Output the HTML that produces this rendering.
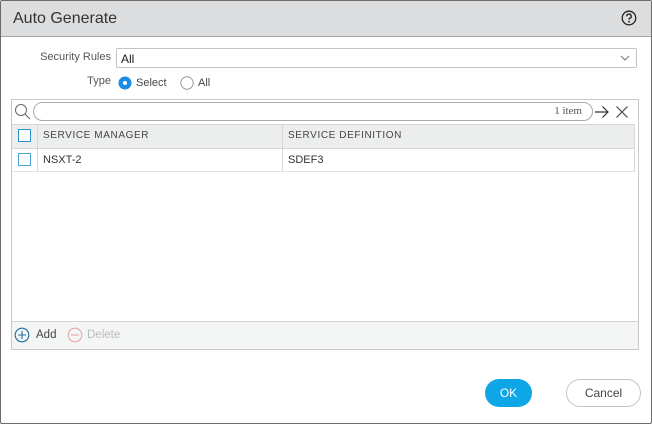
<!DOCTYPE html>
<html><head><meta charset="utf-8"><style>
*{box-sizing:border-box;margin:0;padding:0}
body{width:652px;height:424px;overflow:hidden;background:#fff;font-family:"Liberation Sans",sans-serif;position:relative;color:#333}
.a{position:absolute}
</style></head><body>
<div class="a" style="left:0;top:0;width:652px;height:424px;border:1px solid #6b6b6b;border-radius:2px"></div>
<div class="a" style="left:1px;top:1px;width:650px;height:36px;background:#dcddde;border-bottom:1px solid #a5a5a5"></div>
<div class="a" style="left:13px;top:10px;font-size:16px;color:#333">Auto Generate</div>
<svg class="a" style="left:621px;top:10px" width="16" height="16" viewBox="0 0 16 16"><circle cx="8" cy="8" r="6.8" fill="none" stroke="#222" stroke-width="1.3"/><path d="M5.8 6.3a2.2 2.2 0 1 1 3 2c-.6.3-.8.6-.8 1.3" fill="none" stroke="#222" stroke-width="1.4"/><circle cx="8" cy="11.6" r=".9" fill="#222"/></svg>

<div class="a" style="left:0;top:51px;width:111px;text-align:right;font-size:11px;color:#555">Security Rules</div>
<div class="a" style="left:116px;top:48px;width:521px;height:20px;border:1px solid #c4c4c4;border-radius:2px;font-size:12px;padding:3px 0 0 4px;color:#222">All</div>
<svg class="a" style="left:620px;top:54px" width="10" height="8" viewBox="0 0 10 8"><path d="M1 2l4 4 4-4" fill="none" stroke="#777" stroke-width="1"/></svg>

<div class="a" style="left:0;top:75px;width:111px;text-align:right;font-size:11px;color:#555">Type</div>
<svg class="a" style="left:118px;top:76px" width="14" height="14"><circle cx="7" cy="7" r="6.5" fill="#1b8ce3"/><circle cx="7" cy="7" r="2" fill="#fff"/></svg>
<div class="a" style="left:136px;top:77px;font-size:11px;color:#444">Select</div>
<svg class="a" style="left:180px;top:76px" width="14" height="14"><circle cx="7" cy="7" r="6.2" fill="#fff" stroke="#999" stroke-width="1"/></svg>
<div class="a" style="left:198px;top:77px;font-size:11px;color:#444">All</div>

<div class="a" style="left:11px;top:99px;width:628px;height:251px;border:1px solid #c8c8c8"></div>
<svg class="a" style="left:14px;top:103px" width="18" height="18" viewBox="0 0 18 18"><circle cx="7" cy="7" r="5.5" fill="none" stroke="#666" stroke-width="1"/><path d="M11 11l5 5" stroke="#666" stroke-width="1.1"/></svg>
<div class="a" style="left:33px;top:102px;width:560px;height:19px;border:1px solid #aaa;border-radius:10px;font-size:11px;text-align:right;padding:2px 10px 0 0;color:#555;font-family:'Liberation Serif',serif">1 item</div>
<svg class="a" style="left:594px;top:105px" width="16" height="14" viewBox="0 0 16 14"><path d="M1 7h13M8.5 1.5L14 7l-5.5 5.5" fill="none" stroke="#333" stroke-width="1.2"/></svg>
<svg class="a" style="left:615px;top:105px" width="14" height="14" viewBox="0 0 14 14"><path d="M1.5 1.5l11 11M12.5 1.5l-11 11" stroke="#444" stroke-width="1.2"/></svg>

<div class="a" style="left:12px;top:124px;width:622px;height:25px;background:#eceded;border-top:1px solid #d6d6d6;border-bottom:1px solid #d6d6d6"></div>
<div class="a" style="left:634px;top:124px;width:1px;height:48px;background:#d6d6d6"></div>
<div class="a" style="left:37px;top:124px;width:1px;height:48px;background:#d6d6d6"></div>
<div class="a" style="left:282px;top:124px;width:1px;height:48px;background:#d6d6d6"></div>
<div class="a" style="left:18px;top:129px;width:13px;height:13px;border:1.5px solid #2b8fc9;background:#fff"></div>
<div class="a" style="left:43px;top:130px;font-size:10px;letter-spacing:.6px;color:#444">SERVICE MANAGER</div>
<div class="a" style="left:288px;top:130px;font-size:10px;letter-spacing:.6px;color:#444">SERVICE DEFINITION</div>
<div class="a" style="left:12px;top:171px;width:622px;height:1px;background:#e2e2e2"></div>
<div class="a" style="left:18px;top:153px;width:13px;height:13px;border:1.5px solid #4aa5d8;background:#fff"></div>
<div class="a" style="left:43px;top:154px;font-size:11px;color:#333">NSXT-2</div>
<div class="a" style="left:288px;top:154px;font-size:11px;color:#333">SDEF3</div>

<div class="a" style="left:12px;top:321px;width:626px;height:28px;background:#f4f5f5;border-top:1px solid #d2d2d2"></div>
<svg class="a" style="left:14px;top:327px" width="16" height="16" viewBox="0 0 16 16"><circle cx="8" cy="8" r="6.8" fill="none" stroke="#1f6fa3" stroke-width="1.1"/><path d="M8 4v8M4 8h8" stroke="#1f6fa3" stroke-width="1.1"/></svg>
<div class="a" style="left:36px;top:329px;font-size:11.5px;color:#444">Add</div>
<svg class="a" style="left:67px;top:327px" width="16" height="16" viewBox="0 0 16 16"><circle cx="8" cy="8" r="6.8" fill="none" stroke="#e9a8a8" stroke-width="1.1"/><path d="M4 8h8" stroke="#e9a8a8" stroke-width="1.1"/></svg>
<div class="a" style="left:87px;top:329px;font-size:11.5px;color:#bbb">Delete</div>

<div class="a" style="left:485px;top:379px;width:47px;height:28px;background:#0ea6e6;border-radius:14px;color:#fff;font-size:12px;text-align:center;line-height:28px">OK</div>
<div class="a" style="left:566px;top:379px;width:75px;height:28px;border:1px solid #c4c4c4;border-radius:14px;color:#444;font-size:12px;text-align:center;line-height:26px">Cancel</div>
</body></html>
